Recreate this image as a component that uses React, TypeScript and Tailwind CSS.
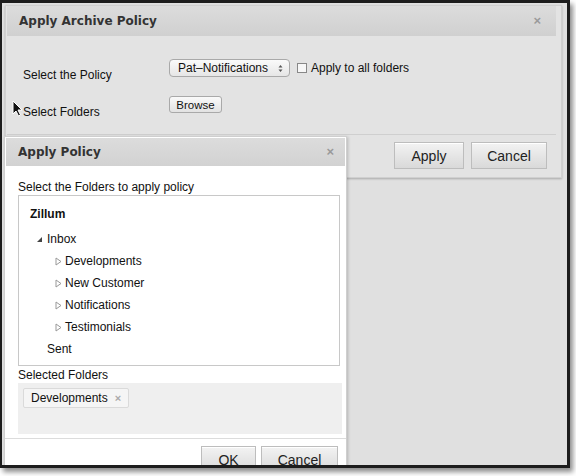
import React from 'react';

const body = { fontFamily: '"Liberation Sans", Arial, sans-serif' };
const title = { fontFamily: '"DejaVu Sans", Verdana, sans-serif' };

const Caret = ({ open }: { open?: boolean }) =>
  open ? (
    <svg width="7" height="7" viewBox="0 0 7 7" className="shrink-0">
      <path d="M6 1 L6 6 L1 6 Z" fill="#444" />
    </svg>
  ) : (
    <svg width="7" height="9" viewBox="0 0 7 9" className="shrink-0">
      <path d="M1 1 L6 4.5 L1 8 Z" fill="none" stroke="#999" strokeWidth="1" />
    </svg>
  );

const GrayButton = ({ label, w }: { label: string; w: string }) => (
  <button
    className={`${w} h-[27px] border border-[#bdbdbd] bg-gradient-to-b from-[#f3f3f3] to-[#d9d9d9] text-[14px] leading-[16px] text-[#222] shadow-[inset_0_1px_0_#fff]`}
    style={body}
  >
    {label}
  </button>
);

const TreeRow = ({ label, indent, caret }: { label: string; indent: string; caret?: 'open' | 'closed' }) => (
  <div className={`h-[22px] flex items-center ${indent}`}>
    {caret === 'open' && (
      <span className="w-[11px] flex items-center">
        <Caret open />
      </span>
    )}
    {caret === 'closed' && (
      <span className="w-[10px] flex items-center">
        <Caret />
      </span>
    )}
    <span className="text-[12px] leading-[14px] text-[#111]">{label}</span>
  </div>
);

export default function App() {
  return (
    <div className="w-[576px] h-[476px] bg-white leading-[14px]" style={body}>
      <div className="relative w-[570px] h-[468px] border-l-2 border-t-[3px] border-r-[3px] border-b-[3px] border-[#1d1d1d] bg-[#e0e0e0] overflow-hidden shadow-[3px_4px_5px_rgba(0,0,0,0.45)]">
        {/* Apply Archive Policy dialog */}
        <div className="absolute left-[3px] top-[2px] w-[557px] h-[173px] bg-[#e3e3e3] border border-[#d0d0d0] shadow-[0_1px_2px_rgba(0,0,0,0.25)] flex flex-col">
          <div className="shrink-0 h-[30px] ml-[1px] bg-gradient-to-b from-[#dcdcdc] to-[#d0d0d0] flex items-center justify-between pl-[12px] pr-[15px] w-[549px]">
            <span className="text-[12px] font-bold text-[#333]" style={title}>Apply Archive Policy</span>
            <span className="text-[13px] font-bold text-[#9a9a9a]">×</span>
          </div>
          <div className="shrink-0 pl-[17px] pt-[23px]">
            <div className="h-[24px] flex items-start">
              <span className="w-[146px] mt-[9px] text-[12px] text-[#111]">Select the Policy</span>
              <div className="h-[18px] w-[121px] rounded-[4px] border border-[#a9a9a9] bg-gradient-to-b from-[#fafafa] to-[#e6e6e6] flex items-center justify-between pl-[8px] pr-[6px]">
                <span className="text-[12px] text-[#111]">Pat–Notifications</span>
                <svg width="5" height="9" viewBox="0 0 5 9">
                  <path d="M0.5 3.5 L2.5 1 L4.5 3.5 Z M0.5 5.5 L2.5 8 L4.5 5.5 Z" fill="#555" />
                </svg>
              </div>
              <div className="ml-[7px] mt-[4px] w-[10px] h-[10px] border border-[#888] bg-[#f7f7f7]" />
              <span className="ml-[4px] mt-[2px] text-[12px] text-[#111]">Apply to all folders</span>
            </div>
            <div className="h-[24px] flex items-start mt-[13px]">
              <span className="w-[146px] mt-[9px] text-[12px] text-[#111]">Select Folders</span>
              <div className="h-[17px] w-[53px] rounded-[3px] border border-[#a9a9a9] bg-gradient-to-b from-[#fafafa] to-[#e2e2e2] flex items-center justify-center">
                <span className="text-[11.5px] text-[#111]">Browse</span>
              </div>
            </div>
          </div>
          <div className="shrink-0 mt-[14px] ml-[1px] w-[549px] border-t border-[#cfcfcf] flex justify-end gap-[7px] pr-[9px] pt-[7px]">
            <GrayButton label="Apply" w="w-[70px]" />
            <GrayButton label="Cancel" w="w-[76px]" />
          </div>
        </div>

        {/* mouse cursor */}
        <svg className="absolute left-[10px] top-[97px]" width="11" height="17" viewBox="0 0 11 17">
          <path d="M1 1 L1 14 L4 11 L6.5 16 L8.5 15 L6 10 L10 10 Z" fill="#111" stroke="#fff" strokeWidth="1" />
        </svg>

        {/* Apply Policy dialog */}
        <div className="absolute left-[2px] top-[133px] w-[343px] h-[340px] bg-white border border-[#cfcfcf] shadow-[1px_1px_3px_rgba(0,0,0,0.2)] flex flex-col">
          <div className="shrink-0 h-[28px] mx-[1px] mt-[1px] bg-gradient-to-b from-[#dcdcdc] to-[#d2d2d2] flex items-center justify-between pl-[12px] pr-[11px]">
            <span className="text-[12px] font-bold text-[#333]" style={title}>Apply Policy</span>
            <span className="text-[13px] font-bold text-[#9a9a9a]">×</span>
          </div>
          <div className="shrink-0 pl-[13px] pr-[4px]">
            <div className="h-[29px] flex items-end pb-[1px] text-[12px] text-[#111]">Select the Folders to apply policy</div>
            <div className="w-[322px] h-[171px] border border-[#c8c8c8] overflow-hidden">
              <div className="h-[22px] flex items-center pl-[11px] mt-[7px] mb-[3px]">
                <span className="text-[12px] font-bold text-[#111]">Zillum</span>
              </div>
              <TreeRow label="Inbox" indent="pl-[17px]" caret="open" />
              <TreeRow label="Developments" indent="pl-[36px]" caret="closed" />
              <TreeRow label="New Customer" indent="pl-[36px]" caret="closed" />
              <TreeRow label="Notifications" indent="pl-[36px]" caret="closed" />
              <TreeRow label="Testimonials" indent="pl-[36px]" caret="closed" />
              <TreeRow label="Sent" indent="pl-[28px]" />
              <TreeRow label="Mail Sent/Emails" indent="pl-[17px]" caret="closed" />
            </div>
            <div className="h-[17px] flex items-center text-[12px] text-[#111]">Selected Folders</div>
            <div className="w-[324px] h-[51px] bg-[#efefef] pt-[5px] pl-[5px]">
              <div className="inline-flex items-center h-[20px] px-[7px] border border-[#dadada] rounded-[2px] bg-[#f5f5f5]">
                <span className="text-[12px] text-[#111]">Developments</span>
                <span className="ml-[7px] text-[11px] font-bold text-[#aaa]">×</span>
              </div>
            </div>
          </div>
          <div className="shrink-0 mt-[4px] border-t border-[#dcdcdc] flex justify-end gap-[5px] pr-[8px] pt-[7px]">
            <GrayButton label="OK" w="w-[55px]" />
            <GrayButton label="Cancel" w="w-[77px]" />
          </div>
        </div>
      </div>
    </div>
  );
}
